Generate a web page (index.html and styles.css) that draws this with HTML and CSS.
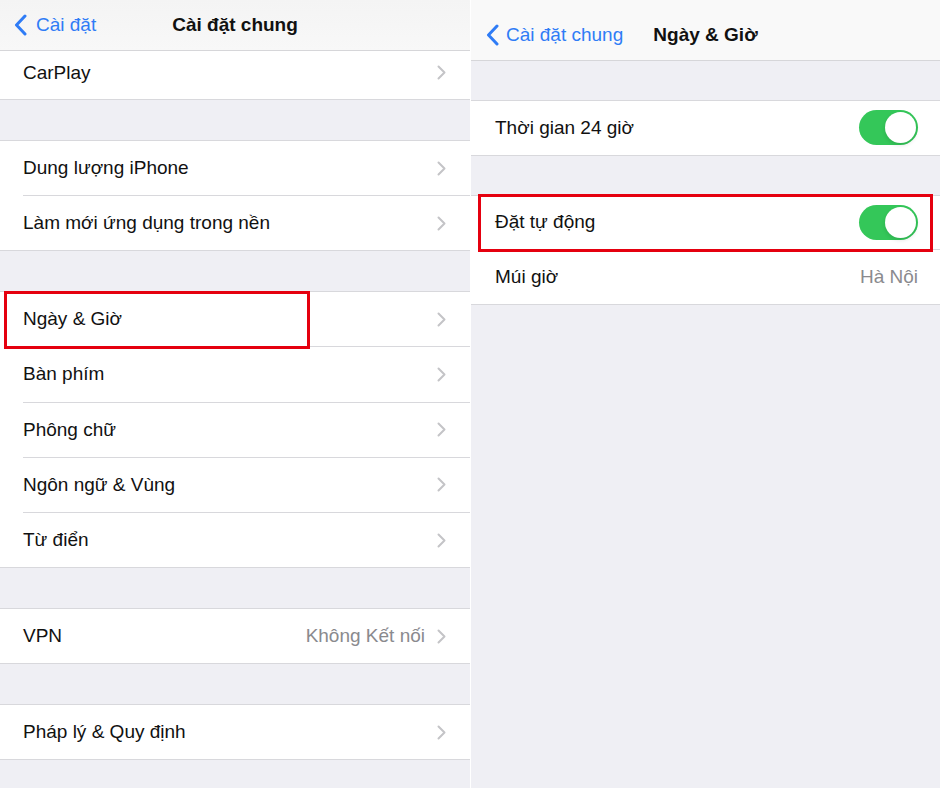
FILE: index.html
```html
<!DOCTYPE html>
<html lang="vi">

<head>
    <meta charset="utf-8">
    <title>Cài đặt chung - Ngày &amp; Giờ</title>
    <!--Stylesheet-->
    <link rel="stylesheet" href="styles.css">
</head>

<body>
    <div class="screens">
        <!--Left screen: Cài đặt chung-->
        <section class="screen screen-left">
            <header class="navbar">
                <a class="back">
                    <svg class="back-icon" viewBox="0 0 13 22" width="13" height="22">
                        <path d="M11 2 L2.5 11 L11 20" />
                    </svg>
                    <span>Cài đặt</span>
                </a>
                <h1 class="title">Cài đặt chung</h1>
            </header>

            <div class="group group-top">
                <div class="row row-short">
                    <div class="row-body">
                        <span class="label">CarPlay</span>
                        <svg class="chevron" viewBox="0 0 9 15" width="9" height="15"><path d="M1.5 1.5 L7.5 7.5 L1.5 13.5" /></svg>
                    </div>
                </div>
            </div>

            <div class="group">
                <div class="row">
                    <div class="row-body">
                        <span class="label">Dung lượng iPhone</span>
                        <svg class="chevron" viewBox="0 0 9 15" width="9" height="15"><path d="M1.5 1.5 L7.5 7.5 L1.5 13.5" /></svg>
                    </div>
                </div>
                <div class="row">
                    <div class="row-body">
                        <span class="label">Làm mới ứng dụng trong nền</span>
                        <svg class="chevron" viewBox="0 0 9 15" width="9" height="15"><path d="M1.5 1.5 L7.5 7.5 L1.5 13.5" /></svg>
                    </div>
                </div>
            </div>

            <div class="group">
                <div class="row">
                    <div class="row-body">
                        <span class="label">Ngày &amp; Giờ</span>
                        <svg class="chevron" viewBox="0 0 9 15" width="9" height="15"><path d="M1.5 1.5 L7.5 7.5 L1.5 13.5" /></svg>
                    </div>
                    <div class="highlight highlight-left"></div>
                </div>
                <div class="row">
                    <div class="row-body">
                        <span class="label">Bàn phím</span>
                        <svg class="chevron" viewBox="0 0 9 15" width="9" height="15"><path d="M1.5 1.5 L7.5 7.5 L1.5 13.5" /></svg>
                    </div>
                </div>
                <div class="row">
                    <div class="row-body">
                        <span class="label">Phông chữ</span>
                        <svg class="chevron" viewBox="0 0 9 15" width="9" height="15"><path d="M1.5 1.5 L7.5 7.5 L1.5 13.5" /></svg>
                    </div>
                </div>
                <div class="row">
                    <div class="row-body">
                        <span class="label">Ngôn ngữ &amp; Vùng</span>
                        <svg class="chevron" viewBox="0 0 9 15" width="9" height="15"><path d="M1.5 1.5 L7.5 7.5 L1.5 13.5" /></svg>
                    </div>
                </div>
                <div class="row">
                    <div class="row-body">
                        <span class="label">Từ điển</span>
                        <svg class="chevron" viewBox="0 0 9 15" width="9" height="15"><path d="M1.5 1.5 L7.5 7.5 L1.5 13.5" /></svg>
                    </div>
                </div>
            </div>

            <div class="group">
                <div class="row">
                    <div class="row-body">
                        <span class="label">VPN</span>
                        <span class="value">Không Kết nối</span>
                        <svg class="chevron" viewBox="0 0 9 15" width="9" height="15"><path d="M1.5 1.5 L7.5 7.5 L1.5 13.5" /></svg>
                    </div>
                </div>
            </div>

            <div class="group">
                <div class="row">
                    <div class="row-body">
                        <span class="label">Pháp lý &amp; Quy định</span>
                        <svg class="chevron" viewBox="0 0 9 15" width="9" height="15"><path d="M1.5 1.5 L7.5 7.5 L1.5 13.5" /></svg>
                    </div>
                </div>
            </div>
        </section>

        <!--Right screen: Ngày & Giờ-->
        <section class="screen screen-right">
            <header class="navbar navbar-tall">
                <a class="back">
                    <svg class="back-icon" viewBox="0 0 13 22" width="13" height="22">
                        <path d="M11 2 L2.5 11 L11 20" />
                    </svg>
                    <span>Cài đặt chung</span>
                </a>
                <h1 class="title">Ngày &amp; Giờ</h1>
            </header>

            <div class="group">
                <div class="row row-tall">
                    <div class="row-body">
                        <span class="label">Thời gian 24 giờ</span>
                        <span class="switch"><span class="knob"></span></span>
                    </div>
                </div>
            </div>

            <div class="group">
                <div class="row row-tall">
                    <div class="row-body">
                        <span class="label">Đặt tự động</span>
                        <span class="switch"><span class="knob"></span></span>
                    </div>
                    <div class="highlight highlight-right"></div>
                </div>
                <div class="row row-tall">
                    <div class="row-body">
                        <span class="label">Múi giờ</span>
                        <span class="value">Hà Nội</span>
                    </div>
                </div>
            </div>
        </section>
    </div>
</body>

</html>
```

FILE: styles.css
```css
*,
*:before,
*:after {
    padding: 0;
    margin: 0;
    box-sizing: border-box;
}

body {
    width: 940px;
    height: 788px;
    overflow: hidden;
    background: #ffffff;
    font-family: 'Liberation Sans', Arial, sans-serif;
    color: #111111;
}

.screens {
    display: flex;
    gap: 1px;
    height: 100%;
}

.screen {
    background: #efeff4;
    height: 100%;
    overflow: hidden;
}

.screen-left {
    width: 470px;
}

.screen-right {
    width: 469px;
}

/* nav bar */
.navbar {
    display: grid;
    grid-template-columns: 1fr auto 1fr;
    align-items: center;
    height: 51px;
    padding-bottom: 1px;
    background: linear-gradient(#f4f4f4, #f8f8f8);
    border-bottom: 1px solid #d6d6d9;
}

.navbar-tall {
    height: 61px;
    padding-top: 10px;
    padding-bottom: 0;
    background: #f9f9f9;
}

.back {
    display: flex;
    align-items: center;
    gap: 9px;
    padding-left: 14px;
    color: #2f7cf6;
    font-size: 19px;
    white-space: nowrap;
}

.screen-right .back {
    padding-left: 15px;
    gap: 7px;
}

.back-icon {
    fill: none;
    stroke: #2f7cf6;
    stroke-width: 3;
    stroke-linecap: round;
    stroke-linejoin: round;
}

.title {
    font-size: 19px;
    font-weight: 700;
    color: #111111;
    white-space: nowrap;
}

/* groups & rows */
.group {
    background: #ffffff;
    border-top: 1px solid #d8d8dc;
    border-bottom: 1px solid #d8d8dc;
    margin-top: 40px;
}

.group-top {
    margin-top: 0;
    border-top: none;
}

.row {
    position: relative;
    padding-left: 23px;
}

.screen-right .row {
    padding-left: 24px;
}

.row-body {
    display: flex;
    align-items: center;
    height: 54px;
    padding-right: 24px;
    font-size: 19px;
}

.row + .row .row-body {
    height: 55.25px;
    border-top: 1px solid #d8d8dc;
}

.row-short .row-body {
    height: 48px;
    padding-bottom: 5px;
}

.row-tall .row-body {
    height: 53.5px;
}

.row-tall + .row-tall .row-body {
    height: 55px;
}

.screen-right .group {
    margin-top: 39px;
}

.screen-right .row-body {
    padding-right: 22px;
}

.label {
    flex: 1;
    white-space: nowrap;
}

.value {
    color: #8a8a8e;
    margin-right: 12px;
}

.screen-right .value {
    margin-right: 0;
}

.chevron {
    fill: none;
    stroke: #c4c4c7;
    stroke-width: 2;
    stroke-linecap: round;
    stroke-linejoin: round;
}

/* switch */
.switch {
    position: relative;
    width: 59px;
    height: 35px;
    border-radius: 18px;
    background: #34c759;
}

.knob {
    position: absolute;
    top: 2px;
    right: 2px;
    width: 31px;
    height: 31px;
    border-radius: 50%;
    background: #ffffff;
    box-shadow: 0 2px 4px rgba(0, 0, 0, 0.12);
}

/* red annotation boxes */
.highlight {
    position: absolute;
    z-index: 2;
    border: 3px solid #e5000f;
    pointer-events: none;
}

.highlight-left {
    top: -1px;
    left: 4px;
    width: 306px;
    height: 58px;
}

.highlight-right {
    top: -2px;
    left: 7px;
    width: 455px;
    height: 58px;
}
```
